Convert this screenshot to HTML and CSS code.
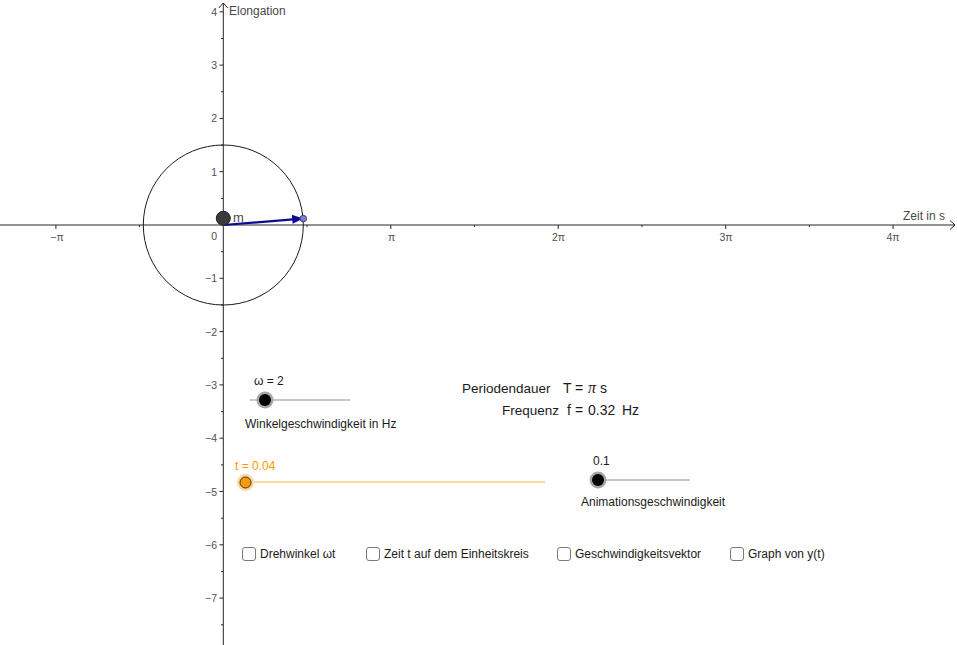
FILE: index.html
```html
<!DOCTYPE html>
<html lang="de">
<head>
<meta charset="utf-8">
<title>Harmonische Schwingung</title>
<link rel="stylesheet" href="styles.css">
</head>
<body>
<div class="applet">
<svg class="graph" width="957" height="645" viewBox="0 0 957 645" xmlns="http://www.w3.org/2000/svg">
  <!-- axes -->
  <g class="axis">
    <line x1="0" y1="225" x2="955" y2="225"/>
    <polyline points="950,220.5 955,225 950,229.5" fill="none"/>
    <line x1="223.3" y1="645" x2="223.3" y2="3"/>
    <polyline points="218.8,8 223.3,3 227.8,8" fill="none"/>
  </g>
  <!-- y ticks -->
  <g class="axis">
    <line x1="219.5" y1="11.8" x2="223" y2="11.8"/>
    <line x1="219.5" y1="65.1" x2="223" y2="65.1"/>
    <line x1="219.5" y1="118.4" x2="223" y2="118.4"/>
    <line x1="219.5" y1="171.7" x2="223" y2="171.7"/>
    <line x1="219.5" y1="278.3" x2="223" y2="278.3"/>
    <line x1="219.5" y1="331.6" x2="223" y2="331.6"/>
    <line x1="219.5" y1="384.9" x2="223" y2="384.9"/>
    <line x1="219.5" y1="438.2" x2="223" y2="438.2"/>
    <line x1="219.5" y1="491.5" x2="223" y2="491.5"/>
    <line x1="219.5" y1="544.8" x2="223" y2="544.8"/>
    <line x1="219.5" y1="598.1" x2="223" y2="598.1"/>
    <line x1="221" y1="38.5" x2="223" y2="38.5"/>
    <line x1="221" y1="91.8" x2="223" y2="91.8"/>
    <line x1="221" y1="145.1" x2="223" y2="145.1"/>
    <line x1="221" y1="198.4" x2="223" y2="198.4"/>
    <line x1="221" y1="251.7" x2="223" y2="251.7"/>
    <line x1="221" y1="305" x2="223" y2="305"/>
    <line x1="221" y1="358.3" x2="223" y2="358.3"/>
    <line x1="221" y1="411.6" x2="223" y2="411.6"/>
    <line x1="221" y1="464.9" x2="223" y2="464.9"/>
    <line x1="221" y1="518.2" x2="223" y2="518.2"/>
    <line x1="221" y1="571.5" x2="223" y2="571.5"/>
    <line x1="221" y1="624.8" x2="223" y2="624.8"/>
  </g>
  <!-- x ticks -->
  <g class="axis">
    <line x1="55.9" y1="225" x2="55.9" y2="229"/>
    <line x1="390.8" y1="225" x2="390.8" y2="229"/>
    <line x1="558.2" y1="225" x2="558.2" y2="229"/>
    <line x1="725.7" y1="225" x2="725.7" y2="229"/>
    <line x1="893.1" y1="225" x2="893.1" y2="229"/>
    <line x1="139.6" y1="225" x2="139.6" y2="227"/>
    <line x1="307" y1="225" x2="307" y2="227"/>
    <line x1="474.5" y1="225" x2="474.5" y2="227"/>
    <line x1="642" y1="225" x2="642" y2="227"/>
    <line x1="809.4" y1="225" x2="809.4" y2="227"/>
  </g>
  <!-- tick labels -->
  <g class="ticklabel ylab">
    <text x="217" y="15.8">4</text>
    <text x="217" y="69.1">3</text>
    <text x="217" y="122.4">2</text>
    <text x="217" y="175.7">1</text>
    <text x="217" y="282.3">−1</text>
    <text x="217" y="335.6">−2</text>
    <text x="217" y="388.9">−3</text>
    <text x="217" y="442.2">−4</text>
    <text x="217" y="495.5">−5</text>
    <text x="217" y="548.8">−6</text>
    <text x="217" y="602.1">−7</text>
    <text x="217" y="240">0</text>
  </g>
  <g class="ticklabel xlab">
    <text x="57" y="241">−π</text>
    <text x="391.5" y="241">π</text>
    <text x="558.5" y="241">2π</text>
    <text x="726" y="241">3π</text>
    <text x="893" y="241">4π</text>
  </g>
  <text class="axislabel" x="229" y="15">Elongation</text>
  <text class="axislabel" x="903" y="220">Zeit in s</text>

  <!-- unit circle -->
  <circle class="circ" cx="223.3" cy="225" r="80"/>
  <!-- vector -->
  <line class="vec" x1="223.3" y1="225" x2="293" y2="219.4"/>
  <polygon class="vechead" points="303.3,218.6 291.8,214.8 292.6,223.8"/>
  <circle class="tip" cx="303.3" cy="218.6" r="3.3"/>
  <!-- mass -->
  <circle class="mass" cx="223.3" cy="218.3" r="7"/>
  <text class="mlabel" x="233" y="222">m</text>

  <!-- slider omega -->
  <line class="track" x1="250" y1="400" x2="350" y2="400"/>
  <circle class="halo" cx="265" cy="400" r="8.5"/>
  <circle class="knob" cx="265" cy="400" r="6"/>
  <text class="wlabel" x="254" y="385">ω = 2</text>
  <text class="wlabel" x="245" y="428">Winkelgeschwindigkeit in Hz</text>

  <!-- slider t -->
  <line class="track-t" x1="245" y1="482" x2="545" y2="482"/>
  <circle class="halo-t" cx="245.5" cy="482.5" r="8.5"/>
  <circle class="knob-t" cx="245.5" cy="482.5" r="5.5"/>
  <text class="wlabel tlabel" x="235" y="470">t = 0.04</text>

  <!-- slider animation -->
  <line class="track" x1="590" y1="480" x2="690" y2="480"/>
  <circle class="halo" cx="598" cy="480" r="8.5"/>
  <circle class="knob" cx="598" cy="480" r="6"/>
  <text class="wlabel" x="593" y="465">0.1</text>
  <text class="wlabel" x="581" y="506">Animationsgeschwindigkeit</text>

  <!-- formulas -->
  <text class="formula" x="462" y="393">Periodendauer<tspan class="math" x="563">T</tspan><tspan class="math" x="575">=</tspan><tspan class="pi" x="588">π</tspan><tspan class="math" x="600">s</tspan></text>
  <text class="formula" x="502" y="415">Frequenz<tspan class="math" x="567">f</tspan><tspan class="math" x="575">=</tspan><tspan class="math" x="588">0.32</tspan><tspan class="math" x="622">Hz</tspan></text>
</svg>

<label class="check c1"><span class="box"></span><span class="ctext">Drehwinkel ωt</span></label>
<label class="check c2"><span class="box"></span><span class="ctext">Zeit t auf dem Einheitskreis</span></label>
<label class="check c3"><span class="box"></span><span class="ctext">Geschwindigkeitsvektor</span></label>
<label class="check c4"><span class="box"></span><span class="ctext">Graph von y(t)</span></label>
</div>
</body>
</html>
```

FILE: styles.css
```css
html, body {
  margin: 0;
  padding: 0;
  background: #ffffff;
}
.applet {
  position: relative;
  width: 957px;
  height: 645px;
  overflow: hidden;
  font-family: "Liberation Sans", Arial, sans-serif;
}
.graph {
  display: block;
}
.axis line, .axis polyline {
  stroke: #262626;
  stroke-width: 1;
}
.ticklabel text {
  font-family: "Liberation Sans", Arial, sans-serif;
  font-size: 10.5px;
  fill: #505050;
}
.ylab text {
  text-anchor: end;
}
.xlab text {
  text-anchor: middle;
}
.axislabel {
  font-family: "Liberation Sans", Arial, sans-serif;
  font-size: 12px;
  fill: #4a4a4a;
}
.mlabel {
  font-family: "Liberation Sans", Arial, sans-serif;
  font-size: 13px;
  fill: #4a4a4a;
}
.circ {
  fill: none;
  stroke: #1a1a1a;
  stroke-width: 1;
}
.vec {
  stroke: #0a0a96;
  stroke-width: 2.2;
}
.vechead {
  fill: #0a0a96;
}
.tip {
  fill: #7b7bdb;
  stroke: #3a3a5a;
  stroke-width: 0.9;
}
.mass {
  fill: #3a3a3a;
  stroke: #222;
  stroke-width: 1;
}
.track {
  stroke: #8c8c8c;
  stroke-width: 1;
}
.halo {
  fill: #a6a6a6;
}
.knob {
  fill: #000000;
}
.track-t {
  stroke: #ffcc7a;
  stroke-width: 1.5;
}
.halo-t {
  fill: #ffd699;
}
.knob-t {
  fill: #ff9900;
  stroke: #333;
  stroke-width: 1;
}
.wlabel {
  font-family: "Liberation Sans", Arial, sans-serif;
  font-size: 12px;
  fill: #1a1a1a;
}
.tlabel {
  fill: #ff9900;
}
.formula {
  font-family: "Liberation Sans", Arial, sans-serif;
  font-size: 13.5px;
  fill: #1a1a1a;
}
.formula .math {
  font-size: 14px;
}
.formula .pi {
  font-family: "Liberation Serif", serif;
  font-style: italic;
  font-size: 16px;
}
.check {
  position: absolute;
  display: flex;
  align-items: center;
  gap: 4px;
  top: 547px;
  font-size: 12px;
  line-height: 14px;
  color: #1a1a1a;
}
.c1 { left: 242px; }
.c2 { left: 366px; }
.c3 { left: 557px; }
.c4 { left: 730px; }
.box {
  box-sizing: border-box;
  width: 14px;
  height: 14px;
  border: 1.5px solid #7a7a7a;
  border-radius: 3px;
  background: #fff;
}
```
